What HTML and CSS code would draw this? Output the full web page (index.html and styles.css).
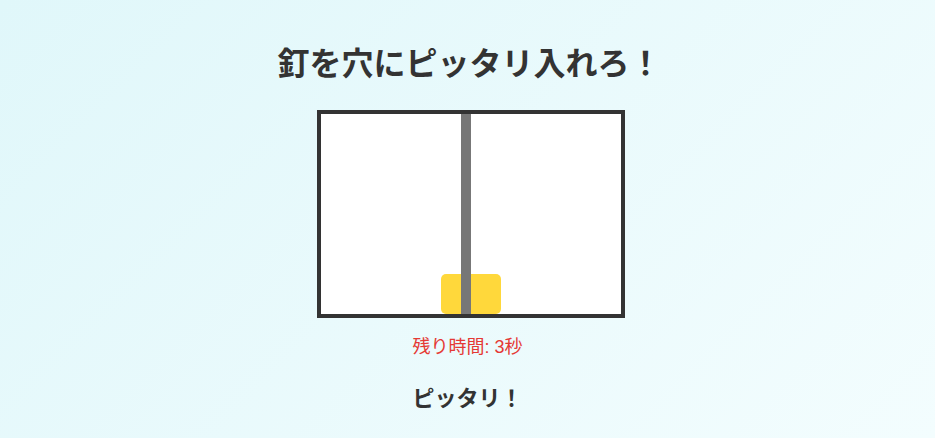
FILE: index.html
```html
<!DOCTYPE html>
<html lang="ja">
<head>
<meta charset="utf-8">
<title>釘を穴にピッタリ入れろ！</title>
<link rel="stylesheet" href="styles.css">
</head>
<body>
<main class="game">
  <h1 class="title">釘を穴にピッタリ入れろ！</h1>
  <div class="stage">
    <div class="board">
      <div class="hole"></div>
      <div class="nail"></div>
    </div>
  </div>
  <p class="timer">残り時間: 3秒</p>
  <p class="result">ピッタリ！</p>
</main>
</body>
</html>
```
FILE: styles.css
```css
html, body {
  margin: 0;
  height: 100%;
}
body {
  background: linear-gradient(135deg, #e0f7fa 0%, #f3fdfe 100%);
  font-family: "Noto Sans CJK JP", "Noto Sans", sans-serif;
  color: #333;
}
.game {
  display: flex;
  flex-direction: column;
  align-items: center;
  padding-top: 39px;
}
.title {
  margin: 0 0 0 4px;
  font-size: 32px;
  line-height: 45px;
  font-weight: 700;
  color: #333;
}
.stage {
  margin-top: 26px;
  padding-left: 7px;
}
.board {
  position: relative;
  width: 300px;
  height: 200px;
  border: 4px solid #333;
  background: #fff;
}
.hole {
  position: absolute;
  left: 120px;
  bottom: 0;
  width: 60px;
  height: 40px;
  border-radius: 5px;
  background: #ffd83b;
}
.nail {
  position: absolute;
  left: 140px;
  top: 0;
  bottom: 0;
  width: 10px;
  background: #777;
}
.timer {
  margin: 16px 0 0;
  font-family: "Liberation Sans", "Noto Sans CJK JP", sans-serif;
  font-size: 18px;
  line-height: 26px;
  color: #e53935;
}
.result {
  margin: 21px 0 0;
  font-size: 22px;
  line-height: 30px;
  font-weight: 700;
  color: #333;
}
```
